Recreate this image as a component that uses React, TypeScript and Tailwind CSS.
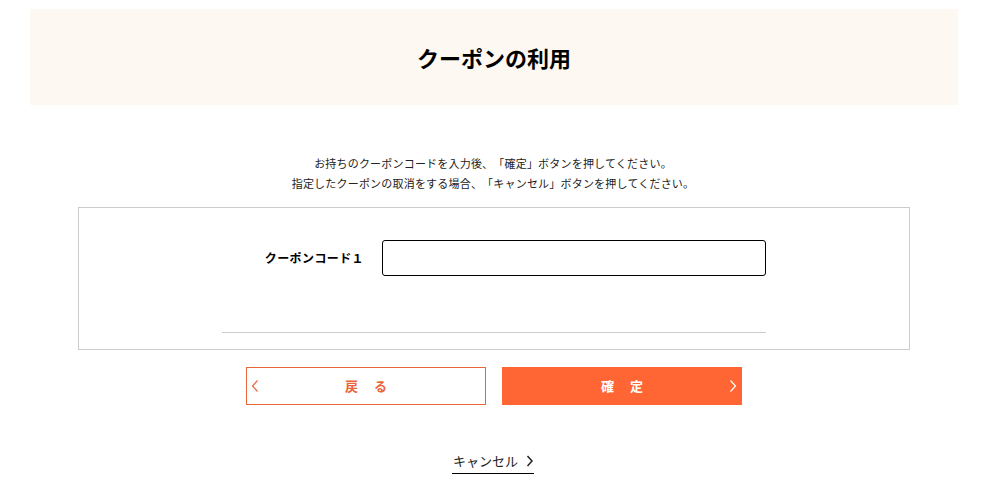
import React from "react";

const jp = { fontFamily: '"Noto Sans CJK JP", "Noto Sans", sans-serif' };

export default function App() {
  return (
    <div className="w-[986px] h-[490px] bg-white text-[#222] overflow-hidden [text-spacing-trim:space-all]" style={jp}>
      <div className="pt-[9px]">
        <div className="w-[928px] ml-[30px] h-[96px] bg-[#fdf9f2] flex items-center justify-center">
          <h1 className="text-[22px] font-bold text-black leading-none">クーポンの利用</h1>
        </div>
      </div>

      <div className="mt-[48px] flex flex-col items-center text-[11px] leading-[20px] tracking-[0.2px] text-[#222]">
        <p>お持ちのクーポンコードを入力後、「確定」ボタンを押してください。</p>
        <p>指定したクーポンの取消をする場合、「キャンセル」ボタンを押してください。</p>
      </div>

      <div className="mt-[14px] ml-[78px] w-[832px] border border-[#cccccc] pt-[32px] pb-[16px] flex justify-center">
        <div className="w-[544px]">
          <div className="flex items-center h-[36px]">
            <div className="w-[160px] pr-[18px] text-right text-[12px] font-bold tracking-[0.4px] text-black">
              クーポンコード１
            </div>
            <input
              className="w-[384px] h-[36px] border-[1.5px] border-black rounded-[3px] px-2 outline-none"
              type="text"
            />
          </div>
          <div className="mt-[56px] h-px bg-[#cccccc]" />
        </div>
      </div>

      <div className="mt-[17px] flex justify-center gap-[16px] ml-[2px]">
        <button className="relative w-[240px] h-[38px] border border-[#e8663a] bg-white text-[#e8663a] text-[13px] font-bold flex items-center justify-center">
          <svg className="absolute left-[4px] top-1/2 -translate-y-1/2" width="8" height="14" viewBox="0 0 8 14" fill="none">
            <path d="M6.5 1.5L1.5 7l5 5.5" stroke="#e8663a" strokeWidth="1.2" />
          </svg>
          <span className="tracking-[16px] mr-[-16px]">戻る</span>
        </button>
        <button className="relative w-[240px] h-[38px] bg-[#ff6633] text-white text-[13px] font-bold flex items-center justify-center">
          <span className="tracking-[16px] mr-[-16px]">確定</span>
          <svg className="absolute right-[5px] top-1/2 -translate-y-1/2" width="8" height="14" viewBox="0 0 8 14" fill="none">
            <path d="M1.5 1.5L6.5 7l-5 5.5" stroke="#ffffff" strokeWidth="1.2" />
          </svg>
        </button>
      </div>

      <div className="mt-[47px] flex justify-center">
        <a className="flex items-center gap-[8px] border-b border-black pb-[3px] pl-[1px] text-[13px] leading-[18px] text-[#222] cursor-pointer">
          <span>キャンセル</span>
          <svg width="8" height="12" viewBox="0 0 8 12" fill="none">
            <path d="M1.5 1L6 6l-4.5 5" stroke="#222" strokeWidth="1.5" />
          </svg>
        </a>
      </div>
    </div>
  );
}
